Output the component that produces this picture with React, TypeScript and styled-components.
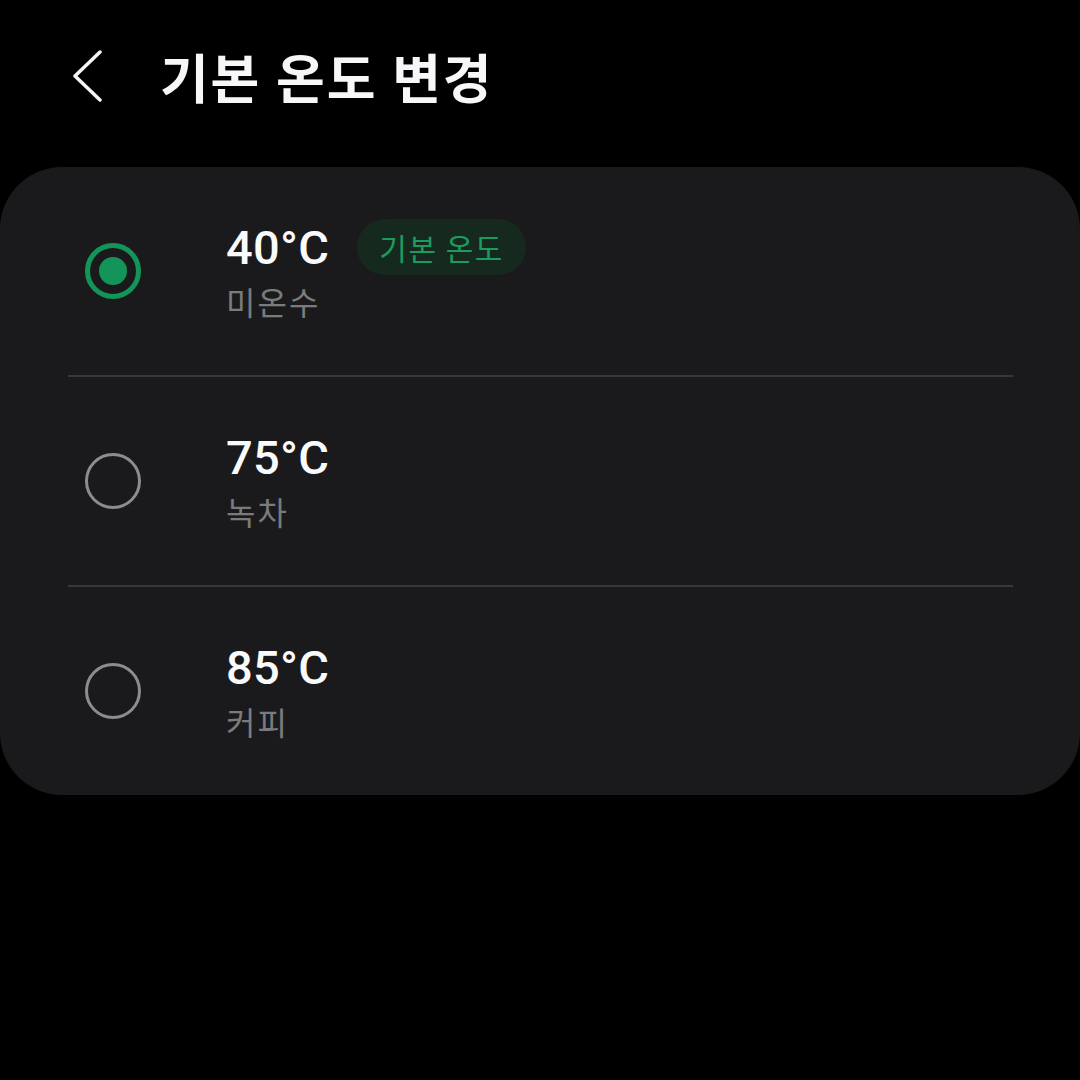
import React from 'react';
import styled, { createGlobalStyle } from 'styled-components';

const GlobalStyle = createGlobalStyle`
  html, body {
    margin: 0;
    padding: 0;
    background: #000;
  }
  body {
    font-family: Roboto, "Noto Sans CJK KR", sans-serif;
    -webkit-font-smoothing: antialiased;
  }
`;

const Page = styled.div`
  width: 1080px;
  height: 1080px;
  background: #000;
  color: #fff;
  display: flex;
  flex-direction: column;
`;

const Header = styled.header`
  height: 167px;
  display: flex;
  align-items: center;
  padding: 0 0 16px 66px;
  box-sizing: border-box;
  gap: 50px;
`;

const BackButton = styled.button`
  background: none;
  border: none;
  padding: 0;
  width: 44px;
  height: 56px;
  display: flex;
  align-items: center;
  justify-content: center;
  color: #f4f4f6;
  cursor: pointer;
`;

const Title = styled.h1`
  margin: 0;
  font-family: Roboto, "Noto Sans CJK KR", sans-serif;
  font-size: 53px;
  font-weight: 700;
  color: #f7f7f9;
  letter-spacing: 1.8px;
`;

const Card = styled.section`
  background: #1a1a1c;
  border-radius: 62px;
  display: flex;
  flex-direction: column;
`;

const Row = styled.div`
  height: 208px;
  display: flex;
  align-items: center;
  padding-left: 85px;
  box-sizing: border-box;
`;

const Divider = styled.div`
  height: 2px;
  margin: 0 67px 0 68px;
  background: #38383a;
`;

const Radio = styled.div<{ checked: boolean }>`
  width: 56px;
  height: 56px;
  box-sizing: border-box;
  border-radius: 50%;
  border: ${({ checked }) => (checked ? '5px solid #13955a' : '3px solid #8d8d8f')};
  display: flex;
  align-items: center;
  justify-content: center;
  flex-shrink: 0;

  &::after {
    content: '';
    display: ${({ checked }) => (checked ? 'block' : 'none')};
    width: 28px;
    height: 28px;
    border-radius: 50%;
    background: #13955a;
  }
`;

const TextBlock = styled.div`
  margin-left: 85px;
  display: flex;
  flex-direction: column;
  gap: 4px;
`;

const TitleLine = styled.div`
  display: flex;
  align-items: center;
  gap: 28px;
  height: 56px;
`;

const Temp = styled.span`
  font-family: Roboto, sans-serif;
  font-size: 47px;
  font-weight: 500;
  color: #fafafa;
  letter-spacing: 0.3px;
`;

const Badge = styled.span`
  height: 56px;
  padding: 0 22px;
  border-radius: 28px;
  background: #16291f;
  color: #1d9a5d;
  font-family: "Noto Sans CJK KR", sans-serif;
  font-size: 30px;
  letter-spacing: 1.5px;
  display: flex;
  align-items: center;
`;

const Sub = styled.span`
  font-family: "Noto Sans CJK KR", sans-serif;
  font-size: 32px;
  letter-spacing: 2px;
  color: #7b7b7d;
  line-height: 44px;
`;

const options = [
  { temp: '40°C', label: '미온수', isDefault: true },
  { temp: '75°C', label: '녹차', isDefault: false },
  { temp: '85°C', label: '커피', isDefault: false },
];

const App: React.FC = () => {
  const selected = 0;
  return (
    <Page>
      <GlobalStyle />
      <Header>
        <BackButton aria-label="뒤로">
          <svg width="32" height="52" viewBox="0 0 32 52" fill="none">
            <polyline points="28,2 3,26 28,50" stroke="currentColor" strokeWidth="3.5" strokeLinecap="round" strokeLinejoin="round" />
          </svg>
        </BackButton>
        <Title>기본 온도 변경</Title>
      </Header>
      <Card>
        {options.map((opt, i) => (
          <React.Fragment key={opt.temp}>
            {i > 0 && <Divider />}
            <Row>
              <Radio checked={i === selected} />
              <TextBlock>
                <TitleLine>
                  <Temp>{opt.temp}</Temp>
                  {opt.isDefault && <Badge>기본 온도</Badge>}
                </TitleLine>
                <Sub>{opt.label}</Sub>
              </TextBlock>
            </Row>
          </React.Fragment>
        ))}
      </Card>
    </Page>
  );
};

export default App;
